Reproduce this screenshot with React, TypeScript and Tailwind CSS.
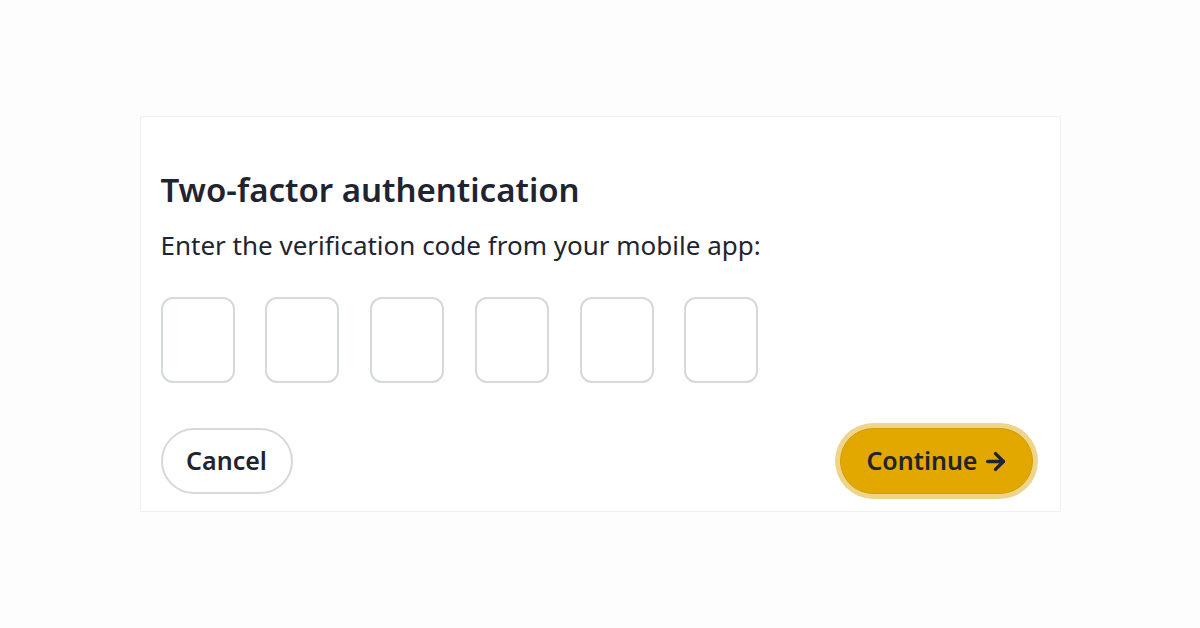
import { ArrowRight } from "lucide-react";

const digits = [0, 1, 2, 3, 4, 5];

export default function App() {
	return (
		<div className="flex h-[628px] w-[1200px] items-start justify-center bg-[#fdfdfd] pt-[116px] font-['Noto_Sans',sans-serif] text-[#1f2430]">
			<div className="flex w-[921px] flex-col border border-[#f0f0f0] bg-white px-5 pb-[17px] pt-[51px]">
				<h1 className="text-[33px] font-semibold leading-[44px]">Two-factor authentication</h1>
				<p className="mt-[16px] text-[26px] leading-[34px]">Enter the verification code from your mobile app:</p>

				<div className="mt-[35px] flex gap-[30.8px]">
					{digits.map((d) => (
						<input
							key={d}
							type="text"
							maxLength={1}
							className="h-[86px] w-[74px] rounded-[12px] border-2 border-[#d5d8dd] bg-white text-center text-3xl outline-none"
						/>
					))}
				</div>

				<div className="mt-[45px] flex items-center justify-between">
					<button className="h-[66px] w-[132px] rounded-full border-2 border-[#d8d8d8] bg-white text-[25px] font-semibold">
						Cancel
					</button>
					<button className="mr-[7px] flex h-[66px] items-center gap-1 rounded-full border border-[#d39e00] bg-[#e2a800] pl-[25px] pr-[23px] text-[25px] font-semibold ring-[5px] ring-[#efd58c]">
						Continue
						<ArrowRight className="h-[27px] w-[27px]" strokeWidth={3} />
					</button>
				</div>
			</div>
		</div>
	);
}
